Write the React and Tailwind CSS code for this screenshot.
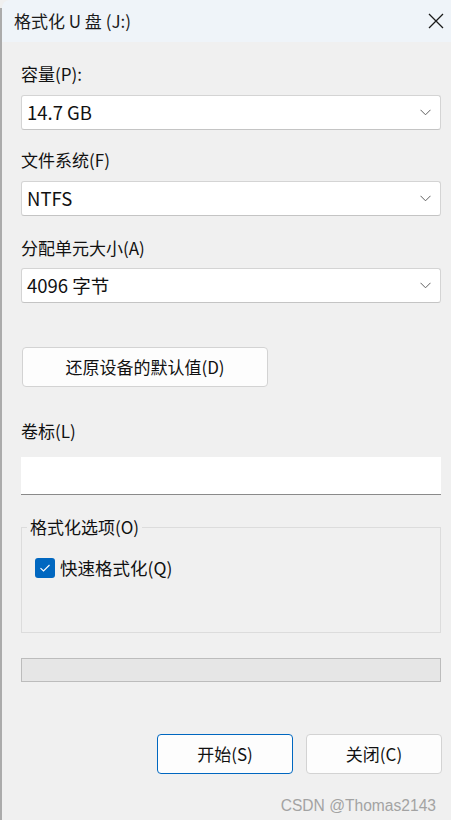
import React from "react";

const F = { fontFamily: '"Noto Sans CJK SC", "Noto Sans", sans-serif' };

function Chevron() {
  return (
    <svg width="11" height="7" viewBox="0 0 11 7" fill="none">
      <path d="M0.5 0.8 L5.5 5.8 L10.5 0.8" stroke="#5f5f5f" strokeWidth="1" />
    </svg>
  );
}

function Combo({ value }) {
  return (
    <div className="h-[35px] bg-white border border-[#d4d4d4] border-b-[#c4c4c4] rounded-[3px] flex items-center justify-between pl-[5px] pr-[9px]">
      <span className="text-[18.5px] text-[#111]">{value}</span>
      <Chevron />
    </div>
  );
}

export default function App() {
  return (
    <div className="w-[451px] h-[820px] bg-[#f0f0f0] flex text-[#111]" style={F}>
      <div className="w-[2px] bg-[#ababab] mt-[8px]" />
      <div className="flex-1 flex flex-col">
        <div className="h-[42px] bg-[#eff4f9] rounded-tl-[8px] flex items-center justify-between pl-[12px] pr-[7px]">
          <span className="text-[17px] text-[#1a1a1a]">格式化 U 盘 (J:)</span>
          <svg width="16" height="16" viewBox="0 0 16 16" fill="none">
            <path d="M1 1 L15 15 M15 1 L1 15" stroke="#1a1a1a" strokeWidth="1.3" />
          </svg>
        </div>
        <div className="flex flex-col pl-[19px] pr-[10px]">
          <div className="mt-[20px] h-[24px] leading-[24px] text-[17px]">容量(P):</div>
          <div className="mt-[9px]"><Combo value="14.7 GB" /></div>
          <div className="mt-[18px] h-[24px] leading-[24px] text-[17px]">文件系统(F)</div>
          <div className="mt-[9px]"><Combo value="NTFS" /></div>
          <div className="mt-[20px] h-[24px] leading-[24px] text-[17px]">分配单元大小(A)</div>
          <div className="mt-[8px]"><Combo value="4096 字节" /></div>
          <div className="mt-[44px] ml-[1px] w-[246px] h-[40px] bg-[#fdfdfd] border border-[#d3d3d3] rounded-[4px] flex items-center justify-center text-[17px]">
            还原设备的默认值(D)
          </div>
          <div className="mt-[32px] h-[24px] leading-[24px] text-[17px]">卷标(L)</div>
          <div className="mt-[14px] h-[38px] bg-white border-b border-[#8a8a8a]" />
          <fieldset className="mt-[22px] h-[116px] border border-[#dcdcdc] px-[13px] m-0">
            <legend className="ml-[-8px] px-[3px] text-[17px] leading-[20px]">格式化选项(O)</legend>
            <div className="mt-[18px] flex items-center gap-[5px]">
              <div className="w-[20px] h-[20px] rounded-[3px] bg-[#0067c0] flex items-center justify-center">
                <svg width="12" height="10" viewBox="0 0 12 10" fill="none">
                  <path d="M1.5 5.2 L4.5 8 L10.5 2" stroke="#ffffff" strokeWidth="1.1" />
                </svg>
              </div>
              <span className="text-[17.5px]">快速格式化(Q)</span>
            </div>
          </fieldset>
          <div className="mt-[25px] h-[24px] bg-[#e6e6e6] border border-[#bcbcbc]" />
          <div className="mt-[52px] mr-[-1px] flex justify-end gap-[13px]">
            <div className="w-[136px] h-[40px] bg-[#fdfdfd] border border-[#0067c0] rounded-[4px] flex items-center justify-center text-[17px]">
              开始(S)
            </div>
            <div className="w-[136px] h-[40px] bg-[#fdfdfd] border border-[#d3d3d3] rounded-[4px] flex items-center justify-center text-[17px]">
              关闭(C)
            </div>
          </div>
          <div className="mt-[20px] flex justify-end pr-[5px]">
            <span className="text-[15.6px] text-[#a3a3a3]" style={{ fontFamily: '"Liberation Sans", Arial, sans-serif' }}>
              CSDN @Thomas2143
            </span>
          </div>
        </div>
      </div>
    </div>
  );
}
